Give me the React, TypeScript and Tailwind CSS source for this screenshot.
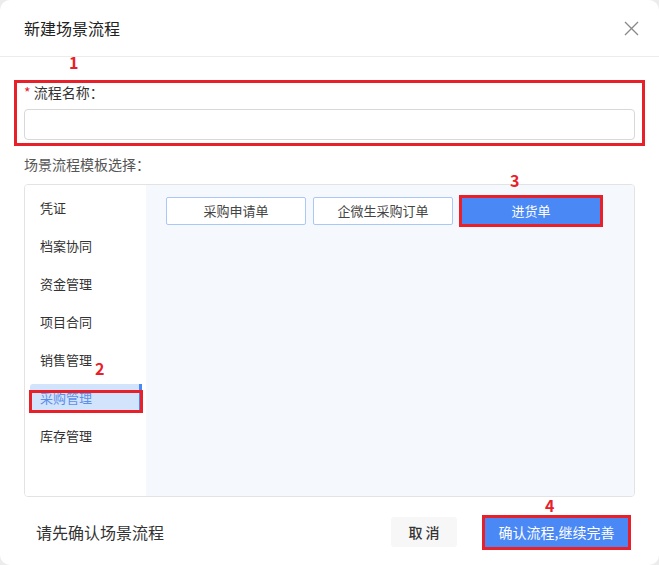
import React from "react";

const categories = ["凭证", "档案协同", "资金管理", "项目合同", "销售管理", "采购管理", "库存管理"];
const templates = ["采购申请单", "企微生采购订单", "进货单"];

const Step = ({ n, className }: { n: string; className: string }) => (
  <span className={`absolute text-[16px] font-bold text-[#e8202a] leading-none ${className}`}>{n}</span>
);

const App = () => {
  const active = "采购管理";
  const picked = "进货单";

  return (
    <div
      className="w-[659px] h-[565px] bg-[#ececec]"
      style={{ fontFamily: '"Noto Sans CJK SC", "Noto Sans", sans-serif' }}
    >
      <div className="relative w-full h-full bg-white rounded-[10px] flex flex-col">
        <div className="h-[57px] flex items-center justify-between pl-6 pr-5 border-b border-[#ececec]">
          <span className="text-[16px] text-[#222]">新建场景流程</span>
          <svg width="15" height="15" viewBox="0 0 15 15" className="text-[#888]">
            <path d="M1 1 L14 14 M14 1 L1 14" stroke="currentColor" strokeWidth="1.3" />
          </svg>
        </div>

        <Step n="1" className="left-[69px] top-[54px]" />
        <div className="mt-[23px] mx-[14px] border-[3px] border-[#e8202a] px-[7px] pb-[3px]">
          <div className="text-[14px] text-[#333] leading-[18px]">
            <span className="text-[#e8202a]">* </span>流程名称：
          </div>
          <div className="mt-[8px] h-[31px] border border-[#d8d8d8] rounded-[4px] bg-white" />
        </div>

        <div className="mt-[7px] ml-6 text-[14px] text-[#555] leading-[22px]">场景流程模板选择：</div>

        <div className="mt-[9px] mx-6 h-[313px] border border-[#e3e3e3] rounded-[4px] flex overflow-hidden">
          <div className="w-[121px] bg-white pt-[9px] flex flex-col">
            {categories.map((c) =>
              c === active ? (
                <div key={c} className="relative ml-[5px] mr-[4px] h-[28px] mb-[10px] flex items-center bg-[#d2e3fc] rounded-l-[3px]">
                  <span className="absolute right-0 top-0 bottom-0 w-[3px] bg-[#4a88f5]" />
                  <span className="absolute -left-[1px] right-[-1px] top-[6px] -bottom-[1px] border-[3px] border-[#e8202a]" />
                  <span className="pl-[10px] text-[13px] text-[#5b8fe8]">{c}</span>
                </div>
              ) : (
                <div key={c} className="h-[28px] mb-[10px] flex items-center pl-[15px] text-[13px] text-[#333]">
                  {c}
                </div>
              )
            )}
          </div>
          <div className="flex-1 bg-[#f5f8fc] pt-[12px] pl-[20px] flex items-start gap-[7px]">
            {templates.map((t) =>
              t === picked ? (
                <div key={t} className="relative w-[140px] h-[28px] bg-[#4a88f5] flex items-center justify-center text-[13px] text-white ml-[1px]">
                  <span className="absolute -inset-[2px] border-[3px] border-[#e8202a]" />
                  {t}
                </div>
              ) : (
                <div key={t} className="w-[140px] h-[28px] border border-[#a9c8f7] rounded-[2px] bg-white flex items-center justify-center text-[13px] text-[#444]">
                  {t}
                </div>
              )
            )}
          </div>
        </div>

        <Step n="3" className="left-[510px] top-[172px]" />
        <Step n="2" className="left-[95px] top-[360px]" />
        <Step n="4" className="left-[545px] top-[497px]" />

        <div className="flex-1 flex items-center pl-[36px] pr-[29px] pt-[2px]">
          <span className="text-[16px] text-[#333] flex-1">请先确认场景流程</span>
          <div className="w-[66px] h-[30px] bg-[#f7f7f7] rounded-[3px] flex items-center justify-center text-[14px] text-[#333] font-medium">
            取 消
          </div>
          <div className="relative ml-[26px] w-[147px] h-[33px] bg-[#4a88f5] flex items-center justify-center text-[14px] text-white">
            <span className="absolute -inset-[1px] border-[3px] border-[#e8202a]" />
            确认流程,继续完善
          </div>
        </div>
      </div>
    </div>
  );
};

export default App;
